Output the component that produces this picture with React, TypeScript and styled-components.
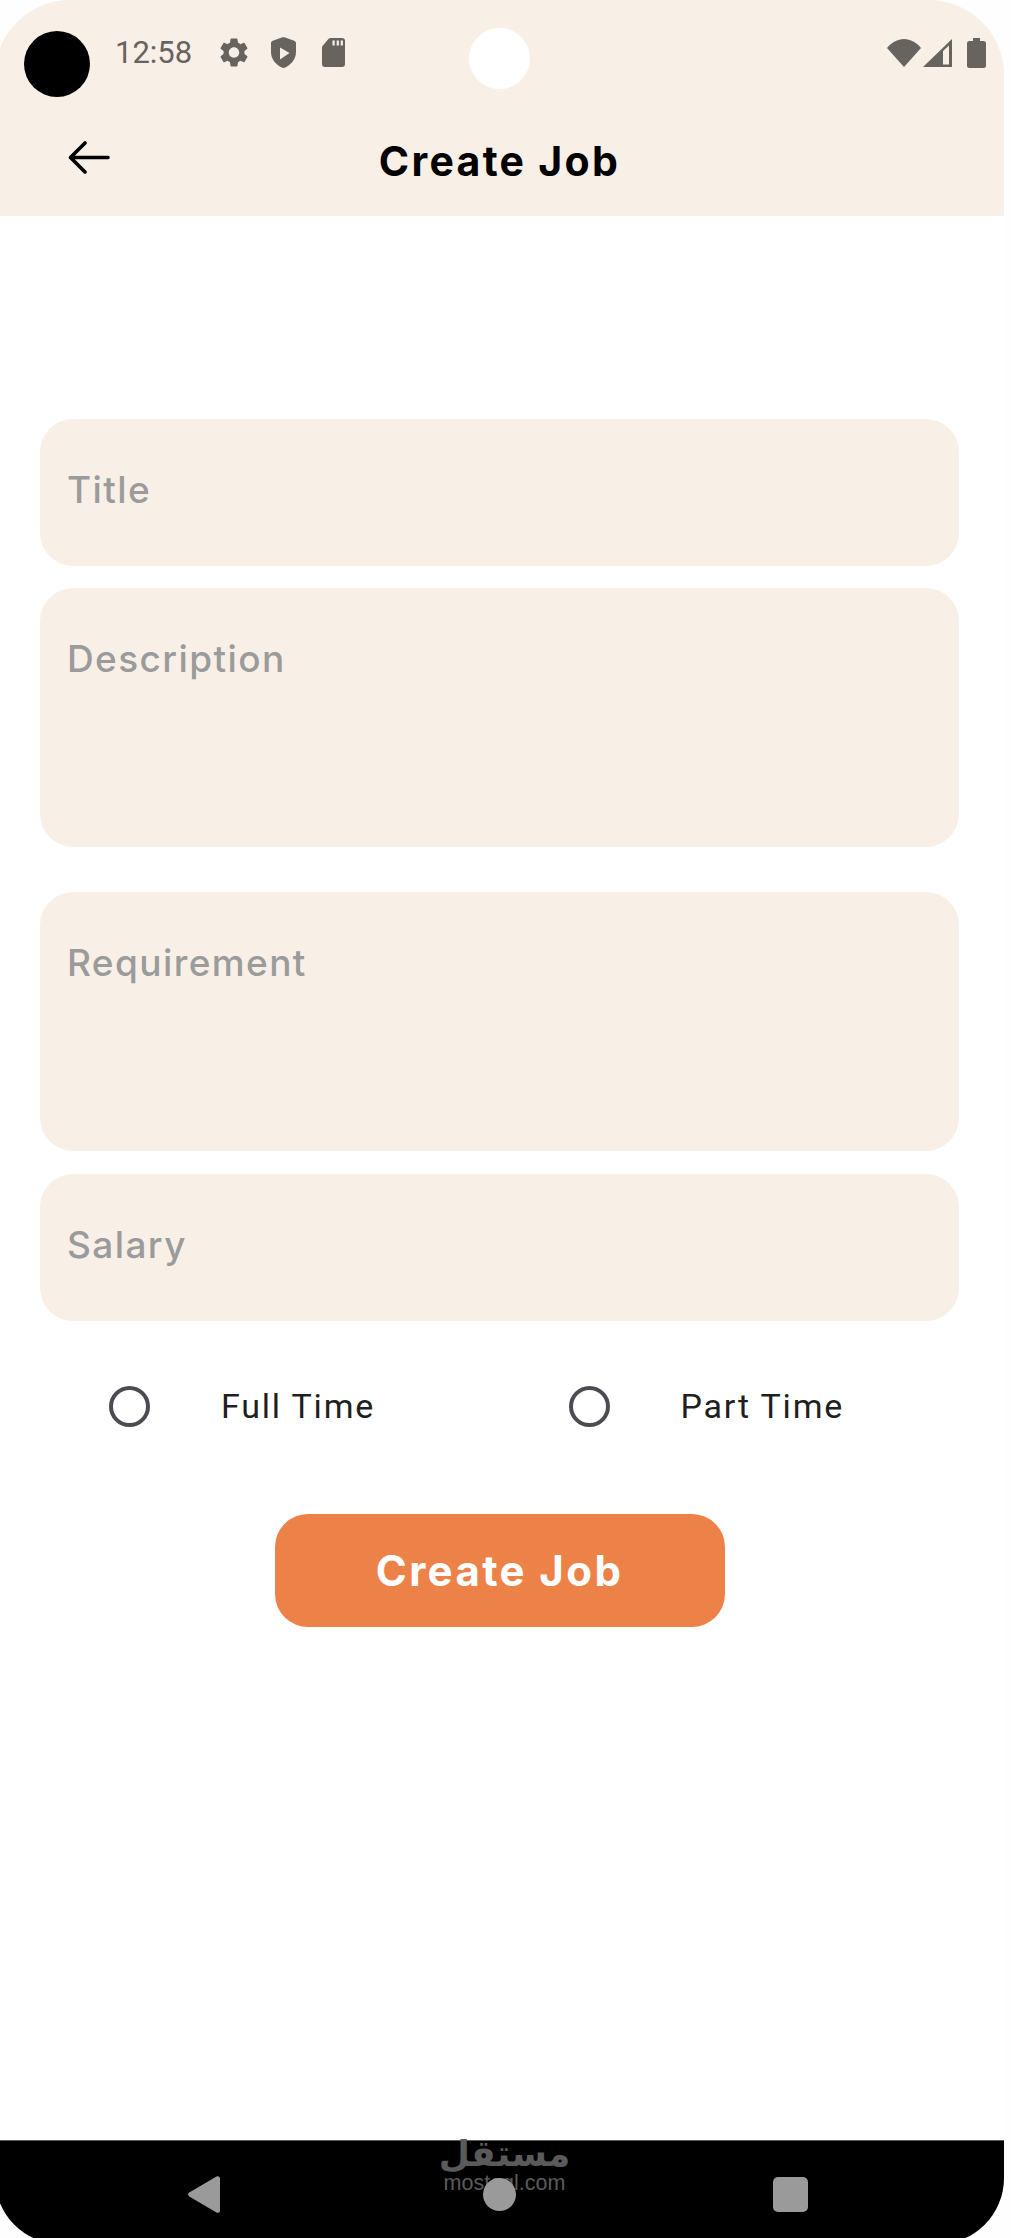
import React from 'react';
import styled, { createGlobalStyle } from 'styled-components';

const GlobalStyle = createGlobalStyle`
    html, body {
        margin: 0;
        height: 100%;
        overflow: hidden;
        background: #fefefe;
    }
`;

const Phone = styled.div`
    position: relative;
    display: flex;
    flex-direction: column;
    width: 1009px;
    height: 2244px;
    margin-left: -5px;
    overflow: hidden;
    background: #fff;
    border-radius: 75px 75px 66px 66px;
    font-family: Inter, 'Noto Sans', sans-serif;
`;

const Header = styled.header`
    flex: none;
    height: 216px;
    background: #f8f0e7;
`;

const StatusBar = styled.div`
    display: flex;
    align-items: center;
    height: 105px;
    padding: 0 18px 0 120px;
    color: #67635f;
`;

const Clock = styled.span`
    font-family: Roboto, sans-serif;
    font-size: 31px;
    margin-right: 28px;
`;

const StatusIcon = styled.svg<{ $after?: number }>`
    flex: none;
    margin-right: ${(p) => p.$after ?? 0}px;
    fill: currentColor;
`;

const Spacer = styled.div`
    flex: 1;
`;

const Camera = styled.div`
    position: absolute;
    top: 31px;
    left: 29px;
    width: 66px;
    height: 66px;
    border-radius: 50%;
    background: #000;
`;

const PunchHole = styled.div`
    position: absolute;
    top: 28px;
    left: 50%;
    width: 61px;
    height: 61px;
    margin-left: -31px;
    border-radius: 50%;
    background: #fff;
`;

const AppBar = styled.div`
    display: grid;
    grid-template-columns: 1fr auto 1fr;
    align-items: center;
    height: 111px;
`;

const BackArrow = styled.svg`
    margin: 0 0 7px 73px;
    fill: none;
    stroke: #000;
    stroke-width: 3.6;
    stroke-linecap: round;
    stroke-linejoin: round;
`;

const Title = styled.h1`
    margin: 0;
    font-size: 41px;
    font-weight: 700;
    color: #000;
    letter-spacing: 2.3px;
`;

const Main = styled.main`
    flex: 1;
    padding: 203px 45px 0;
`;

const Field = styled.div<{ $tall?: boolean; $after?: number }>`
    box-sizing: border-box;
    height: ${(p) => (p.$tall ? 259 : 147)}px;
    margin-bottom: ${(p) => p.$after ?? 22}px;
    padding: 49px 27px 0;
    border-radius: 33px;
    background: #f8f0e7;
    color: #9b9b9b;
    font-size: 37px;
    font-weight: 500;
    line-height: 44px;
    letter-spacing: 1.4px;
`;

const RadioRow = styled.div`
    display: grid;
    grid-template-columns: 1fr 1fr;
    height: 60px;
    margin-top: 55px;
`;

const RadioOption = styled.label`
    display: flex;
    align-items: center;
    gap: 71px;
    padding-left: 69px;
    font-family: Roboto, sans-serif;
    font-size: 34px;
    letter-spacing: 1.8px;
    color: #1f1f22;
`;

const RadioDot = styled.span`
    box-sizing: border-box;
    width: 41px;
    height: 41px;
    border: 4.5px solid #4b4b52;
    border-radius: 50%;
`;

const SubmitButton = styled.button`
    display: block;
    width: 450px;
    height: 113px;
    margin: 78px auto 0;
    padding: 0;
    border: 0;
    border-radius: 33px;
    background: #ed8249;
    color: #fff;
    font-family: inherit;
    font-size: 42px;
    font-weight: 700;
    letter-spacing: 2.4px;
`;

const NavBar = styled.nav`
    position: relative;
    flex: none;
    display: flex;
    align-items: center;
    box-sizing: border-box;
    height: 104px;
    padding: 4px 0 0 193px;
    background: #000;
    border-top: 1px solid #5c5c5c;
`;

const Watermark = styled.div`
    position: absolute;
    top: -6px;
    left: 50%;
    width: 140px;
    margin-left: -65px;
    text-align: center;
    color: #5a5a5a;
`;

const WatermarkArabic = styled.div`
    font-family: 'DejaVu Sans', sans-serif;
    font-weight: 700;
    font-size: 36px;
    line-height: 38px;
`;

const WatermarkLatin = styled.div`
    font-family: 'Liberation Sans', sans-serif;
    font-size: 21.5px;
    line-height: 20px;
`;

const NavBack = styled.svg`
    position: relative;
    margin-right: 263px;
    fill: #9a9a9a;
`;

const NavHome = styled.span`
    position: relative;
    width: 33px;
    height: 33px;
    margin-right: 257px;
    border-radius: 50%;
    background: #9a9a9a;
`;

const NavRecents = styled.span`
    position: relative;
    width: 35px;
    height: 35px;
    border-radius: 5px;
    background: #9a9a9a;
`;

const App = (): React.ReactElement => {
    return (
        <Phone>
            <GlobalStyle />
            <Header>
                <StatusBar>
                    <Clock>12:58</Clock>
                    <StatusIcon $after={23} width="28" height="29" viewBox="2.5 2 19 20">
                        <path d="M19.14 12.94c.04-.3.06-.61.06-.94 0-.32-.02-.64-.07-.94l2.03-1.58c.18-.14.23-.41.12-.61l-1.92-3.32c-.12-.22-.37-.29-.59-.22l-2.39.96c-.5-.38-1.03-.7-1.62-.94l-.36-2.54c-.04-.24-.24-.41-.48-.41h-3.84c-.24 0-.43.17-.47.41l-.36 2.54c-.59.24-1.13.57-1.62.94l-2.39-.96c-.22-.08-.47 0-.59.22L2.74 8.87c-.12.21-.08.47.12.61l2.03 1.58c-.05.3-.09.63-.09.94s.02.64.07.94l-2.03 1.58c-.18.14-.23.41-.12.61l1.92 3.32c.12.22.37.29.59.22l2.39-.96c.5.38 1.03.7 1.62.94l.36 2.54c.05.24.24.41.48.41h3.84c.24 0 .44-.17.47-.41l.36-2.54c.59-.24 1.13-.56 1.62-.94l2.39.96c.22.08.47 0 .59-.22l1.92-3.32c.12-.22.07-.47-.12-.61l-2.01-1.58zM12 15.6c-1.98 0-3.6-1.62-3.6-3.6s1.62-3.6 3.6-3.6 3.6 1.62 3.6 3.6-1.62 3.6-3.6 3.6z" />
                    </StatusIcon>
                    <StatusIcon $after={26} width="25" height="31" viewBox="0 0 25 31">
                        <path
                            fillRule="evenodd"
                            d="M11.5.3c.6-.2 1.4-.2 2 0l9.7 3.4c1.1.4 1.8 1.3 1.8 2.4V15c0 7.6-5.2 13-11.6 15.8-.6.3-1.2.3-1.8 0C5.200 28 0 22.600 0 15V6.100c0-1.100.7-2 1.800-2.400zM9 10.500v12L18.500 16z"
                        />
                    </StatusIcon>
                    <StatusIcon width="23" height="29" viewBox="0 0 23 29">
                        <path
                            fillRule="evenodd"
                            d="M8.500 0H20a3 3 0 0 1 3 3v23a3 3 0 0 1-3 3H3a3 3 0 0 1-3-3V9.500c0-.8.3-1.500.9-2.100L6.400.9C7 .3 7.700 0 8.500 0zM10.500 2.500v5h2.200v-5zM14.700 2.500v5h2.200v-5zM18.700 2.500v5h2.200v-5z"
                        />
                    </StatusIcon>
                    <Spacer />
                    <StatusIcon $after={2} width="34" height="28" viewBox="0 0 34 28">
                        <path d="M0 9C4.500 3.500 10.500 0 17 0s12.500 3.500 17 9L17 28z" />
                    </StatusIcon>
                    <StatusIcon $after={15} width="29" height="28" viewBox="0 0 29 28">
                        <path fillRule="evenodd" d="M0 28 29 0v28zM20 12v13.500h6V6.500z" />
                    </StatusIcon>
                    <StatusIcon width="19" height="30" viewBox="0 0 19 30">
                        <path d="M6 0h7v3h3.500A2.500 2.500 0 0 1 19 5.500v22a2.500 2.500 0 0 1-2.500 2.500h-14A2.500 2.500 0 0 1 0 27.500v-22A2.500 2.500 0 0 1 2.500 3H6z" />
                    </StatusIcon>
                </StatusBar>
                <AppBar>
                    <BackArrow width="42" height="33" viewBox="0 0 42 33">
                        <path d="M40 16.500H3M17 2 2.500 16.500 17 31" />
                    </BackArrow>
                    <Title>Create Job</Title>
                </AppBar>
            </Header>
            <Camera />
            <PunchHole />
            <Main>
                <Field>Title</Field>
                <Field $tall $after={45}>
                    Description
                </Field>
                <Field $tall $after={23}>
                    Requirement
                </Field>
                <Field>Salary</Field>
                <RadioRow>
                    <RadioOption>
                        <RadioDot />
                        Full Time
                    </RadioOption>
                    <RadioOption>
                        <RadioDot />
                        Part Time
                    </RadioOption>
                </RadioRow>
                <SubmitButton>Create Job</SubmitButton>
            </Main>
            <NavBar>
                <Watermark>
                    <WatermarkArabic>مستقل</WatermarkArabic>
                    <WatermarkLatin>mostaql.com</WatermarkLatin>
                </Watermark>
                <NavBack width="32" height="37" viewBox="0 0 32 37">
                    <path d="M28.500.6c1.600-1 3.500 0 3.500 1.900v32c0 1.900-1.900 2.900-3.500 1.900L1.200 20.400c-1.500-.9-1.500-3 0-3.900z" />
                </NavBack>
                <NavHome />
                <NavRecents />
            </NavBar>
        </Phone>
    );
};

export default App;
